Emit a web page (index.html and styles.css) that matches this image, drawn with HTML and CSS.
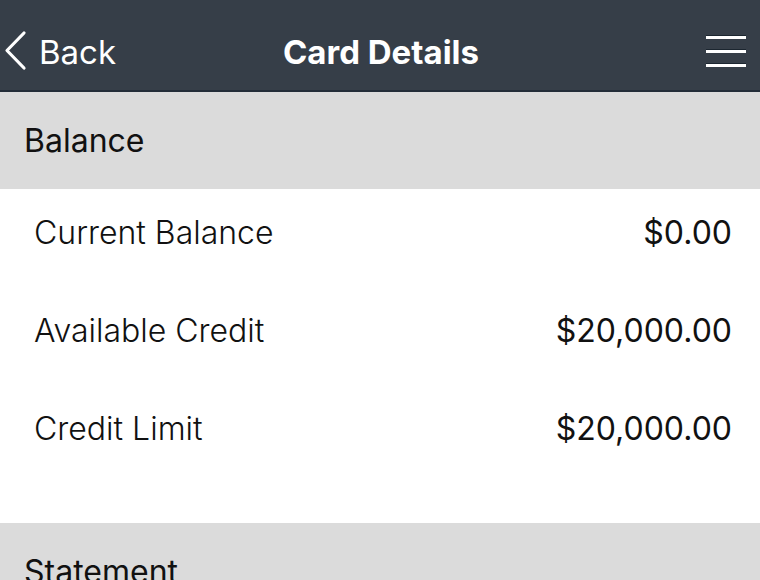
FILE: index.html
```html
<!DOCTYPE html>
<html>
<head>
<meta charset="utf-8">
<link rel="stylesheet" href="styles.css">
</head>
<body>
<div class="app">
  <header class="nav">
    <div class="back">
      <svg class="chev" width="26" height="42" viewBox="0 0 26 42">
        <polyline points="21,3 4,20.5 21,38" fill="none" stroke="#fff" stroke-width="3.2" stroke-linecap="round" stroke-linejoin="round"/>
      </svg>
      <span class="back-text">Back</span>
    </div>
    <div class="title">Card Details</div>
    <svg class="menu" width="40" height="34" viewBox="0 0 40 34">
      <rect x="0" y="0" width="40" height="1.2" fill="#1c2630"/>
      <rect x="0" y="1" width="40" height="3" fill="#fff"/>
      <rect x="0" y="14" width="40" height="1.2" fill="#1c2630"/>
      <rect x="0" y="15" width="40" height="3" fill="#fff"/>
      <rect x="0" y="28" width="40" height="1.2" fill="#1c2630"/>
      <rect x="0" y="29" width="40" height="3" fill="#fff"/>
    </svg>
  </header>
  <section class="section-head">Balance</section>
  <div class="rows">
    <div class="row"><span class="label">Current Balance</span><span class="value">$0.00</span></div>
    <div class="row"><span class="label">Available Credit</span><span class="value">$20,000.00</span></div>
    <div class="row"><span class="label">Credit Limit</span><span class="value">$20,000.00</span></div>
  </div>
  <section class="section-head">Statement</section>
</div>
</body>
</html>
```
FILE: styles.css
```css
html, body {
  margin: 0;
  padding: 0;
  background: #fff;
}
body {
  font-family: Inter, "Noto Sans", "Liberation Sans", sans-serif;
  color: #111;
  width: 760px;
  height: 580px;
  overflow: hidden;
}
.app {
  display: flex;
  flex-direction: column;
}
.nav {
  height: 90px;
  background: #363e48;
  border-bottom: 2px solid #232d38;
  display: flex;
  align-items: center;
  justify-content: space-between;
  padding: 0 14px 0 3px;
  position: relative;
}
.back {
  display: flex;
  align-items: center;
  gap: 10px;
  color: #fff;
  padding-top: 13px;
}
.chev {
  display: block;
  margin-top: -1px;
}
.back-text {
  font-size: 33px;
  font-weight: 400;
  letter-spacing: 0;
}
.title {
  position: absolute;
  left: 0;
  right: 0;
  top: 0;
  bottom: 0;
  display: flex;
  align-items: center;
  justify-content: center;
  color: #fff;
  font-size: 33px;
  font-weight: 700;
  padding-top: 13px;
  padding-left: 2px;
  pointer-events: none;
}
.menu {
  display: block;
  margin-top: 14px;
}
.section-head {
  height: 97px;
  background: #dbdbdb;
  display: flex;
  align-items: center;
  padding-left: 24px;
  font-size: 32px;
  font-weight: 400;
  color: #111;
}
.rows {
  display: flex;
  flex-direction: column;
  gap: 12px;
  padding: 0 28px 52px 34px;
}
.row {
  height: 86px;
  display: flex;
  align-items: center;
  justify-content: space-between;
  font-size: 32px;
}
.label {
  font-weight: 300;
  color: #111;
}
.value {
  font-weight: 400;
  color: #111;
}
```
